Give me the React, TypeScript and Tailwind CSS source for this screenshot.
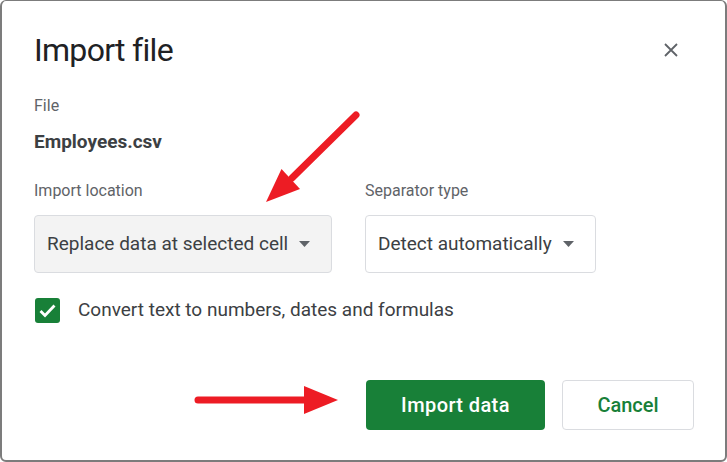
import React from 'react';

const font = { fontFamily: 'Roboto, "Liberation Sans", Arial, sans-serif' };

// small caret used in the select boxes
const Caret: React.FC = () => (
  <svg width="11" height="6" viewBox="0 0 11 6" className="shrink-0">
    <path d="M0 0h11L5.5 6z" fill="#5f6368" />
  </svg>
);

interface SelectBoxProps {
  label: string;
  value: string;
  width: string;
  filled?: boolean;
}

const SelectBox: React.FC<SelectBoxProps> = ({ label, value, width, filled }) => (
  <div className="flex flex-col">
    <div className="text-[16px] leading-6 text-[#5f6368]">{label}</div>
    <div
      className={`mt-3 h-[58px] ${width} flex items-center justify-between pl-3 pr-[21px] rounded-[4px] border border-[#dadce0] ${
        filled ? 'bg-[#f3f3f3]' : 'bg-white'
      }`}
    >
      <span className="text-[19px] text-[#3c4043] whitespace-nowrap">{value}</span>
      <Caret />
    </div>
  </div>
);

const App: React.FC = () => {
  return (
    <div
      style={font}
      className="relative w-[727px] h-[462px] bg-white border-2 border-t border-[#7c7c7c] rounded-[6px] overflow-hidden pl-[32px] pr-[31px] pt-[29px]"
    >
      {/* 헤더 */}
      <div className="h-10 flex items-center justify-between">
        <h1 className="text-[32px] tracking-[-0.7px] text-[#202124] leading-10">Import file</h1>
        <button className="w-6 h-6 mr-[11px] flex items-center justify-center">
          <svg width="14" height="14" viewBox="0 0 14 14">
            <path d="M1 1l12 12M13 1L1 13" stroke="#5f6368" strokeWidth="1.8" />
          </svg>
        </button>
      </div>

      {/* 파일 정보 */}
      <div className="mt-6 text-[16px] leading-6 text-[#5f6368]">File</div>
      <div className="mt-3 text-[19px] leading-6 font-bold text-[#3c4043]">Employees.csv</div>

      {/* 옵션 */}
      <div className="mt-[25px] flex gap-[33px]">
        <SelectBox label="Import location" value="Replace data at selected cell" width="w-[298px]" filled />
        <SelectBox label="Separator type" value="Detect automatically" width="w-[231px]" />
      </div>

      <div className="mt-[23px] flex items-center gap-[18px]">
        <div className="w-[25px] h-[25px] ml-[1px] rounded-[3px] bg-[#188038]">
          <svg width="25" height="25" viewBox="0 0 25 25">
            <path d="M5.5 13l4.5 4.5L19.5 7.5" fill="none" stroke="white" strokeWidth="2.8" />
          </svg>
        </div>
        <span className="text-[19px] text-[#3c4043]">Convert text to numbers, dates and formulas</span>
      </div>

      {/* 버튼 */}
      <div className="mt-[55px] flex justify-end gap-[17px]">
        <button className="w-[179px] h-[50px] rounded-[4px] bg-[#188038] text-white text-[20px] font-medium tracking-[0.4px]">
          Import data
        </button>
        <button className="w-[132px] h-[50px] rounded-[4px] border border-[#dadce0] bg-white text-[#188038] text-[20px] font-medium">
          Cancel
        </button>
      </div>

      {/* 빨간 화살표 */}
      <svg className="absolute left-0 top-0 pointer-events-none" width="727" height="462" viewBox="0 0 727 462" style={{ marginLeft: -2, marginTop: -1 }}>
        <line x1="356" y1="115" x2="292" y2="178" stroke="#ed1c24" strokeWidth="7" strokeLinecap="round" />
        <path d="M266 202L281.5 169L300 189z" fill="#ed1c24" />
        <line x1="198" y1="400" x2="306" y2="400" stroke="#ed1c24" strokeWidth="7" strokeLinecap="round" />
        <path d="M304 386L338 400L304 414z" fill="#ed1c24" />
      </svg>
    </div>
  );
};

export default App;
